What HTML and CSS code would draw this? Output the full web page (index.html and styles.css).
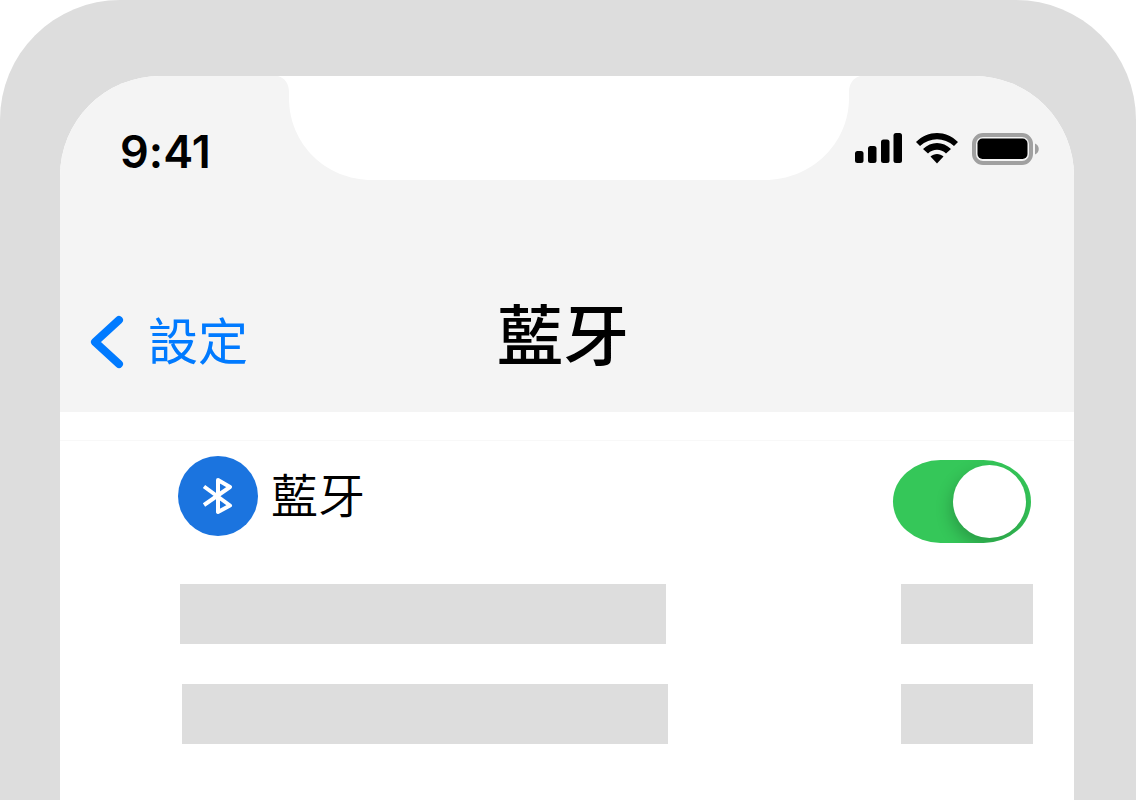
FILE: index.html
```html
<!DOCTYPE html>
<html lang="zh-Hant">
<head>
<meta charset="utf-8">
<meta name="viewport" content="width=device-width, initial-scale=1">
<title>藍牙</title>
<link rel="stylesheet" href="styles.css">
</head>
<body>
<div class="phone">
  <div class="screen">
    <header class="header">
      <div class="status">
        <time class="clock">9:41</time>
        <svg class="notch" viewBox="0 0 562 105" aria-hidden="true">
          <path fill="#fff" d="M-8 0C-1 2 3 8 3 16V22C3 68 40 104 86 104H479C525 104 563 68 563 22V16C563 8 567 2 574 0Z"/>
        </svg>
        <div class="indicators">
          <svg class="signal" viewBox="0 0 48 32" aria-hidden="true">
            <rect x="1" y="18" width="8.500" height="12" rx="2.500"/>
            <rect x="14" y="13" width="8.500" height="17" rx="2.500"/>
            <rect x="27" y="6.500" width="8.500" height="23.500" rx="2.500"/>
            <rect x="39.500" y="0" width="8.500" height="30" rx="2.500"/>
          </svg>
          <svg class="wifi" viewBox="0 0 44 32" aria-hidden="true">
            <path d="M1 9C13-3 31-3 43 9L39 13C29 4 15 4 5 13Z"/>
            <path d="M8 16C16 8 28 8 36 16L31 20.500C26 15.500 18 15.500 13 20.500Z"/>
            <path d="M15.500 23.500C19 20 25 20 28.500 23.500L22 30.500Z"/>
          </svg>
          <svg class="battery" viewBox="0 0 68 32" aria-hidden="true">
            <rect x="2" y="2" width="57" height="28" rx="9" fill="none" stroke="#a0a0a0" stroke-width="4"/>
            <rect x="5.500" y="5.500" width="50" height="20.500" rx="5"/>
            <path d="M63 10.500C68 12.500 68 19.500 63 21.500Z" fill="#a0a0a0"/>
          </svg>
        </div>
      </div>
      <nav class="nav">
        <a class="back" href="#">
          <svg class="chevron" viewBox="0 0 34 54" aria-hidden="true"><path d="M29 5L5 27L29 49"/></svg>
          <span>設定</span>
        </a>
        <h1 class="title">藍牙</h1>
      </nav>
    </header>
    <main class="list">
      <div class="row">
        <label class="label" for="bluetooth">
          <svg class="badge" viewBox="0 0 80 80" aria-hidden="true">
            <circle cx="40" cy="40" r="40"/>
            <path d="M26 30.500L52 49.500L40 56V24L52 31L26 49"/>
          </svg>
          <span>藍牙</span>
        </label>
        <input class="switch" id="bluetooth" type="checkbox" role="switch" checked>
      </div>
      <div class="blank"><div class="bar"></div><div class="bar bar-short"></div></div>
      <div class="blank blank-inset"><div class="bar"></div><div class="bar bar-short"></div></div>
    </main>
  </div>
</div>
</body>
</html>
```
FILE: styles.css
```css
* { box-sizing: border-box; }

body {
  margin: 0;
  background: #fff;
  color: #000;
  font-family: Inter, "Noto Sans CJK TC", sans-serif;
}

.phone {
  display: flex;
  min-height: 100vh;
  padding: 76px 62px 0 60px;
  background: #ddd;
  border-radius: 120px 120px 0 0;
}

.screen {
  flex: 1;
  background: #fff;
  border-radius: 100px 100px 0 0;
  overflow: hidden;
}

.header {
  padding-bottom: 32px;
  background: #f4f4f4;
}

.status {
  display: grid;
  grid-template-columns: 1fr 562px 1fr;
  align-items: start;
}

.clock {
  padding: 48px 0 0 60px;
  font-size: 45px;
  font-weight: 600;
  font-variant-ligatures: no-contextual;
  line-height: 56px;
}

.notch {
  width: 100%;
  overflow: visible;
}

.indicators {
  display: flex;
  justify-content: flex-end;
  gap: 13px;
  padding: 57px 34px 0 0;
}

.indicators svg {
  flex: none;
  height: 32px;
}

.signal { width: 48px; }
.wifi { width: 44px; }
.battery { width: 68px; }

.nav {
  display: grid;
  grid-template-columns: 1fr auto 1fr;
  align-items: center;
  padding: 111px 38px 0 30px;
}

.back {
  display: flex;
  align-items: center;
  gap: 24px;
  padding-top: 12px;
  color: #007aff;
  font-size: 50px;
  line-height: 72px;
  text-decoration: none;
}

.chevron {
  width: 34px;
  height: 54px;
  fill: none;
  stroke: currentColor;
  stroke-width: 8;
  stroke-linecap: round;
  stroke-linejoin: round;
}

.title {
  margin: 0;
  font-size: 66px;
  font-weight: 500;
  line-height: 88px;
}

.list {
  margin-top: 28px;
  border-top: 1px solid #f8f8f8;
}

.row {
  display: flex;
  align-items: flex-start;
  justify-content: space-between;
  padding: 15px 43px 0 118px;
}

.label {
  display: flex;
  align-items: center;
  gap: 13px;
  font-size: 47px;
  font-weight: 350;
  line-height: 80px;
}

.badge {
  width: 80px;
  height: 80px;
  fill: #1b74df;
}

.badge path {
  fill: none;
  stroke: #fff;
  stroke-width: 4;
  stroke-linejoin: round;
}

.switch {
  appearance: none;
  display: flex;
  align-items: center;
  width: 138px;
  height: 83px;
  margin: 4px 0 1px;
  padding: 5px;
  border-radius: 48px / 42px;
  background: #35c759;
  overflow: hidden;
}

.switch::before {
  content: "";
  width: 73px;
  height: 73px;
  border-radius: 50%;
  background: #fff;
  box-shadow: -2px 7px 16px rgba(0, 0, 0, 0.22);
}

.switch:checked { justify-content: flex-end; }

.blank {
  display: flex;
  justify-content: space-between;
  padding: 40px 41px 0 120px;
}

.blank-inset { padding-left: 122px; }

.bar {
  width: 486px;
  height: 60px;
  background: #ddd;
}

.bar-short { width: 132px; }
```
